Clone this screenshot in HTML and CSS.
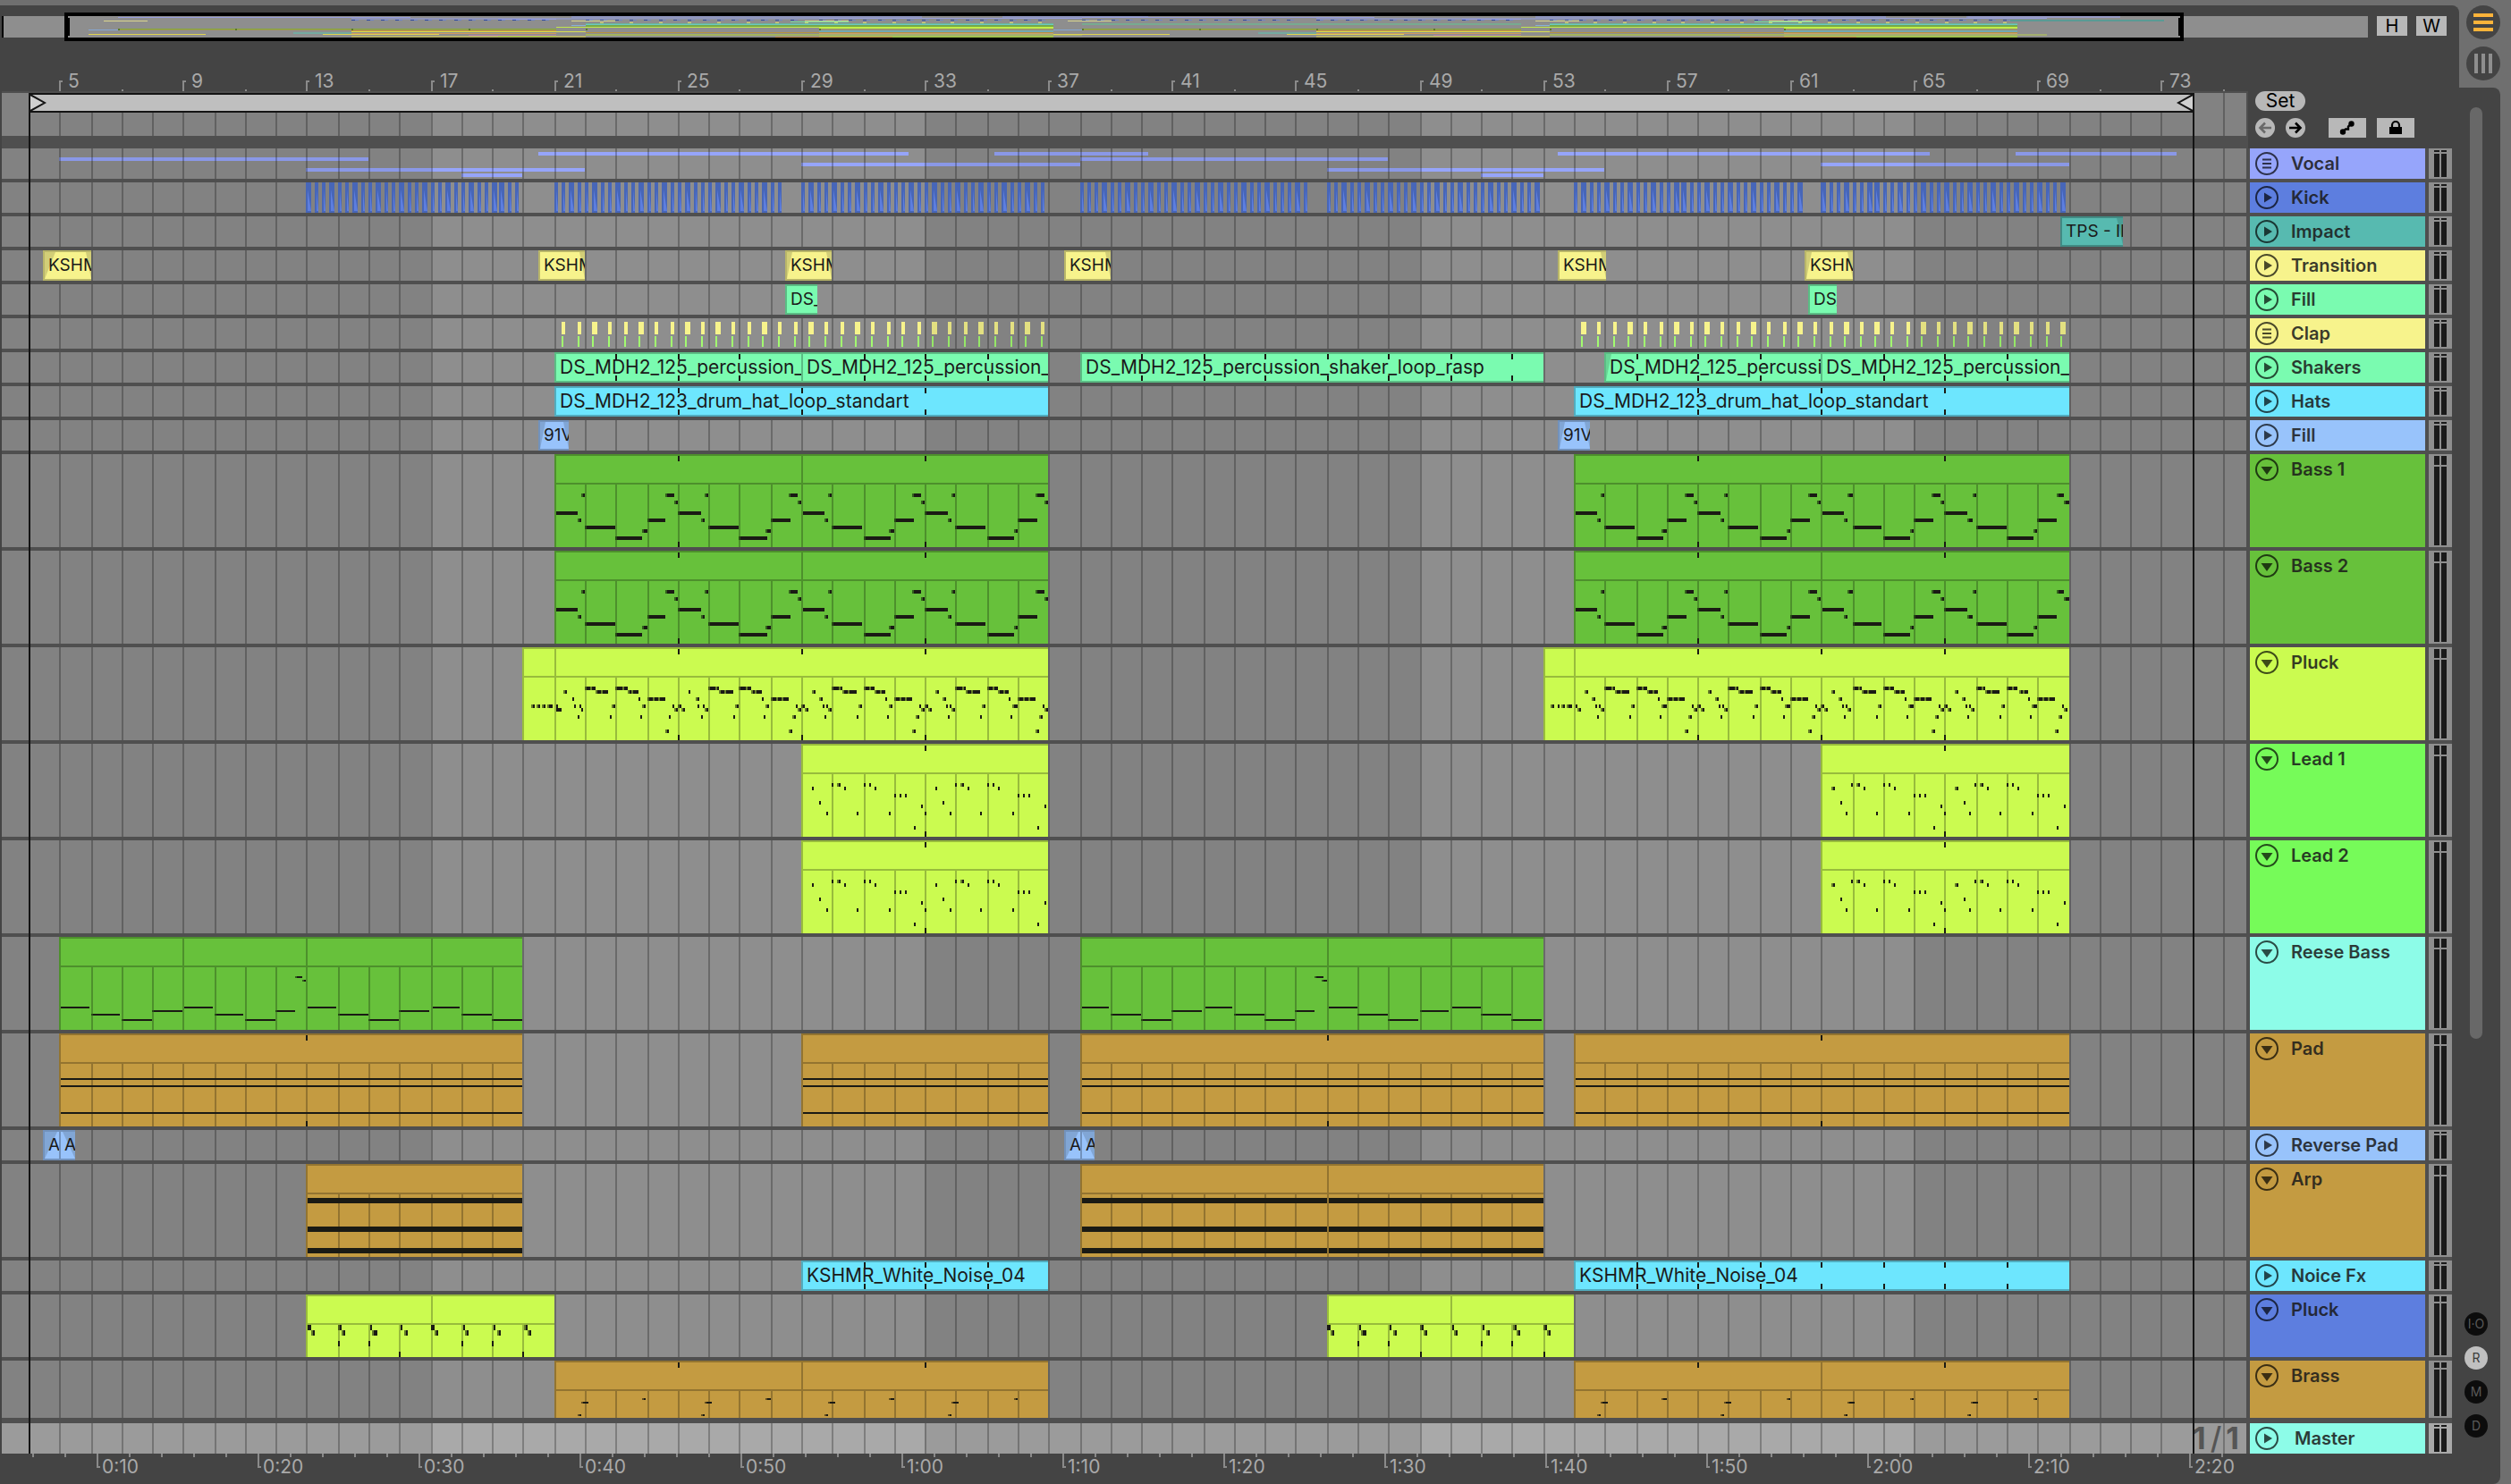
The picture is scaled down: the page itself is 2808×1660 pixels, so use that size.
FILE: index.html
```html
<!DOCTYPE html>
<html lang="en">
<head>
<meta charset="utf-8">
<title>Arrangement</title>
<link rel="stylesheet" href="styles.css">
</head>
<body>
<div class="app">
  <main class="panel">
    <section class="overview-row" aria-label="Overview">
      <div class="overview">
        <div class="overview-map" id="overview"></div>
        <div class="overview-window"></div>
      </div>
      <button class="square-button" type="button">H</button>
      <button class="square-button" type="button">W</button>
    </section>

    <div class="arrangement">
      <div class="top">
        <div class="top-time">
          <div class="ruler bar-ruler" id="bar-ruler"></div>
          <div class="loop-lane" id="loop-lane"></div>
        </div>
        <div class="controls">
          <button class="set-button" type="button">Set</button>
          <div class="control-row">
            <button class="round-button" type="button" aria-label="Previous locator" disabled>
              <svg width="22" height="22" viewBox="0 0 22 22"><path d="M18 11H7M11 5.500L5.500 11l5.500 5.500" fill="none" stroke="#6a6a6a" stroke-width="2.600"/></svg>
            </button>
            <button class="round-button" type="button" aria-label="Next locator">
              <svg width="22" height="22" viewBox="0 0 22 22"><path d="M4 11h11M11 5.500l5.500 5.500L11 16.500" fill="none" stroke="#000" stroke-width="2.600"/></svg>
            </button>
            <button class="tool-button tool-first" type="button" aria-label="Automation mode">
              <svg width="22" height="22" viewBox="0 0 22 22"><circle cx="6" cy="15.500" r="3.200"/><circle cx="15.500" cy="6.500" r="3.200"/><path d="M6 15.500l3-3h3l0-3 3.500-3" fill="none" stroke="#000" stroke-width="2.400"/></svg>
            </button>
            <button class="tool-button" type="button" aria-label="Lock envelopes">
              <svg width="22" height="22" viewBox="0 0 22 22"><path d="M4 10h14v8H4z"/><path d="M7 10V8a4 4 0 0 1 8 0v2" fill="none" stroke="#000" stroke-width="2.200"/></svg>
            </button>
          </div>
        </div>
      </div>
      <div class="tracks" id="tracks"></div>
      <div class="playline" id="play-start"></div>
      <div class="playline" id="play-end"></div>
    </div>
    <div class="ruler time-ruler" id="time-ruler"></div>
  </main>

  <aside class="side">
    <nav class="views">
      <button class="view-button" type="button" aria-label="Arrangement view">
        <svg width="38" height="38" viewBox="0 0 38 38"><path d="M8 9h22v4H8zM8 17h22v4H8zM8 25h22v4H8z" fill="#fdb33a"/></svg>
      </button>
      <button class="view-button" type="button" aria-label="Session view">
        <svg width="38" height="38" viewBox="0 0 38 38"><path d="M9 8h4v22H9zM17 8h4v22h-4zM25 8h4v22h-4z" fill="#8e8e8e"/></svg>
      </button>
    </nav>
    <div class="side-body">
      <div class="scroll-thumb"></div>
      <div class="toggles">
        <button class="toggle" type="button">I·O</button>
        <button class="toggle is-on" type="button">R</button>
        <button class="toggle" type="button">M</button>
        <button class="toggle" type="button">D</button>
      </div>
    </div>
  </aside>
</div>
<script src="app.js"></script>
</body>
</html>
```
FILE: styles.css
```css
* { box-sizing: border-box; }

body {
  margin: 0;
  background: #6f6f6f;
  color: #1a1a1a;
  font-family: Inter, "Liberation Sans", sans-serif;
  font-size: 21px;
  line-height: 34px;
}

button {
  margin: 0;
  padding: 0;
  border: 0;
  background: none;
  color: inherit;
  font: inherit;
}

svg { display: block; }

.app {
  display: flex;
  min-height: 100vh;
  padding: 6px 12px 0 0;
  overflow: hidden;
}

.panel {
  flex: 1;
  min-width: 0;
  padding-top: 8px;
  background: #444;
  border-radius: 0 8px 0 0;
}

/* Overview */
.overview-row {
  display: flex;
  align-items: center;
  gap: 10px;
  height: 32px;
  padding: 0 14px 2px 2px;
}

.overview {
  position: relative;
  flex: 1;
  height: 24px;
  margin-top: 2px;
  border-left: 2px solid #000;
  background: #8e8e8e;
}

.overview-map {
  height: 24px;
  overflow: hidden;
}

.overview-window {
  position: absolute;
  top: -4px;
  bottom: -4px;
  left: 68px;
  width: 2370px;
  border: 4px solid #000;
}

.overview-window::before,
.overview-window::after {
  content: "";
  position: absolute;
  top: 2px;
  bottom: 2px;
  width: 2px;
  background: #000;
}

.overview-window::before { left: 0; }
.overview-window::after { right: 0; }

.square-button {
  width: 34px;
  height: 22px;
  background: #b8b8b8;
  color: #000;
  font-size: 20px;
  line-height: 22px;
}

/* Timeline frame */
.arrangement {
  position: relative;
  padding: 0 8px 0 2px;
}

.top { display: flex; }

.top-time {
  flex: 1;
  min-width: 0;
  padding-bottom: 14px;
  background: #4f4f4f;
}

.ruler {
  position: relative;
  overflow: hidden;
  background: #444;
  color: #a9a9a9;
}

.bar-ruler {
  height: 58px;
  border-bottom: 2px solid #4f4f4f;
}

.time-ruler {
  height: 34px;
  margin: 0 8px 0 2px;
}

.ruler-label {
  position: absolute;
  line-height: 22px;
  white-space: nowrap;
}

.bar-ruler .ruler-label { bottom: 0; }
.time-ruler .ruler-label { top: 4px; }

.loop-lane {
  position: relative;
  height: 48px;
  margin-right: 2px;
  overflow: hidden;
  background: #8e8e8e;
}

.loop-bar {
  position: absolute;
  top: 0;
  height: 22px;
  border: 2px solid #141414;
  background: #bfbfbf;
}

.loop-bar svg {
  position: absolute;
  top: 0;
}

.loop-start { left: 0; }
.loop-end { right: 0; }

.playline {
  position: absolute;
  top: 58px;
  bottom: 0;
  width: 2px;
  background: #141414;
}

/* Locator and automation controls */
.controls {
  width: 228px;
  padding: 56px 0 0 8px;
}

.set-button {
  display: block;
  width: 56px;
  height: 22px;
  border-radius: 11px;
  background: #b8b8b8;
  color: #000;
  line-height: 22px;
}

.control-row {
  display: flex;
  gap: 12px;
  margin-top: 8px;
}

.round-button {
  width: 22px;
  height: 22px;
  border-radius: 50%;
  background: #b8b8b8;
}

.tool-button {
  display: flex;
  justify-content: center;
  width: 42px;
  height: 22px;
  background: #b8b8b8;
}

.tool-first { margin-left: 14px; }

/* Tracks */
.tracks {
  display: flex;
  flex-direction: column;
  gap: 4px;
  background: #4f4f4f;
}

.track {
  display: flex;
  gap: 4px;
  height: 34px;
}

.track-tall { height: 104px; }
.track-medium { height: 70px; }
.track-short { height: 64px; }
.track-master { margin-top: 2px; }

.lane {
  position: relative;
  flex: 1;
  min-width: 0;
  overflow: hidden;
  background: #8e8e8e;
}

.track-master .lane,
.track-master .meter { background: #a9a9a9; }

.lane > svg,
.loop-lane > svg {
  position: absolute;
  top: 0;
  left: 0;
}

.clip {
  position: absolute;
  top: 0;
  bottom: 0;
  overflow: hidden;
}

.clip svg {
  position: absolute;
  top: 0;
  left: 0;
}

.clip-name {
  position: relative;
  display: block;
  overflow: hidden;
  padding-left: 6px;
  white-space: nowrap;
}

.clip-narrow .clip-name { font-size: 19px; }

.grid-value {
  position: absolute;
  right: 8px;
  bottom: 0;
  display: flex;
  gap: 5px;
  color: #555;
  font-size: 34px;
  font-weight: 700;
}

.grid-slash { font-weight: 500; }

.head {
  display: flex;
  align-items: flex-start;
  gap: 14px;
  width: 196px;
  padding: 4px 0 0 6px;
  font-size: 20px;
  font-weight: 600;
  line-height: 26px;
}

.track-master .head { gap: 18px; }

.head-name {
  opacity: 0.85;
  white-space: nowrap;
}

.meter {
  display: grid;
  grid-template-columns: 6px 6px;
  grid-template-rows: 2px 1fr;
  gap: 2px;
  width: 26px;
  padding: 2px 6px;
  background: #8e8e8e;
}

.meter span { background: #1a1a1a; }
.track-tall .meter { grid-template-rows: 10px 1fr; }
.track-medium .meter,
.track-short .meter { grid-template-rows: 6px 1fr; }

/* Right-hand column */
.side {
  display: flex;
  flex-direction: column;
  width: 46px;
}

.views {
  display: flex;
  flex-direction: column;
  gap: 8px;
  height: 92px;
  padding-left: 8px;
}

.view-button {
  width: 38px;
  height: 38px;
  border-radius: 50%;
  background: #444;
}

.side-body {
  display: flex;
  flex: 1;
  flex-direction: column;
  justify-content: space-between;
  padding: 22px 0 52px 12px;
  background: #444;
  border-radius: 0 8px 8px 0;
}

.scroll-thumb {
  width: 14px;
  height: 70%;
  border-radius: 7px;
  background: #686868;
}

.toggles {
  display: flex;
  flex-direction: column;
  gap: 12px;
  margin-left: -6px;
}

.toggle {
  width: 26px;
  height: 26px;
  border-radius: 50%;
  background: #0c0c0c;
  color: #5a5a5a;
  font-size: 14px;
  line-height: 26px;
}

.toggle.is-on {
  background: #c0c0c0;
  color: #3a3a3a;
}
```
FILE: app.js
```js
const PX_PER_BAR = 34.562;
const BAR_FIVE = 64.48;
const FIRST_BAR = 4;
const LAST_BAR = 90;
const INK = "#1a1a14";

const snap = v => 2 * Math.round((v + 2) / 2) - 2;
const X = bar => snap(BAR_FIVE + (bar - 5) * PX_PER_BAR);
const rect = (x, y, w, h) => `M${x} ${y}h${w}v${h}h${-w}z`;
const range = (from, to, step) => {
  const out = [];
  for (let v = from; v < to - 0.001; v += step) out.push(v);
  return out;
};
const svg = (w, h, body) => `<svg width="${w}" height="${h}" aria-hidden="true">${body}</svg>`;
const path = (d, fill, opacity = 1) => `<path d="${d}" fill="${fill}" fill-opacity="${opacity}"/>`;

/* Bar lines, with every other 16 bars shaded */
function grid(h) {
  let shade = rect(0, 0, X(17), h) + rect(X(33), 0, X(49) - X(33), h) + rect(X(65), 0, 2000, h);
  let lines = range(FIRST_BAR, LAST_BAR, 1).map(b => rect(X(b), 0, 2, h)).join("");
  return svg(3200, h, path(shade, "#000", 0.077) + path(lines, "#000", 0.25));
}

const C = {
  violet: "#96a5fb", blue: "#5d7edf", teal: "#57bab0", yellow: "#f7f38c",
  mint: "#7afbb0", cyan: "#6de6fe", sky: "#98c3fb", green: "#67c13b",
  lime: "#cbfb50", lead: "#76fb59", aqua: "#8dfce8", gold: "#c49b41"
};

/* Audio clip: [start, end, name, fade-in px, fade-out px], loop marks */
function audioClip(color, [from, to, name, fadeIn = 0, fadeOut = 0, marks = []]) {
  const x = X(from), w = X(to) - x;
  const edge = rect(0, 0, w, 2) + rect(0, 32, w, 2) + rect(0, 2, 2, 30);
  const fades = (fadeIn ? `M2 2h${fadeIn}L2 32z` : "") + (fadeOut ? `M${w} 2h${-fadeOut}L${w} 32z` : "");
  const ticks = marks.map(b => rect(X(b) - x, 2, 2, 6) + rect(X(b) - x, 26, 2, 6)).join("");
  return `<div class="clip ${w < 80 ? "clip-narrow" : ""}" style="left:${x}px;width:${w}px;background:${color}">` +
    svg(w, 34, path(edge, "#000", 0.25) + path(fades, "#000", 0.15) + path(ticks, INK)) +
    `<span class="clip-name">${name}</span></div>`;
}

/* MIDI clip; notes are [start bar, end bar, y, height] */
function midiClip(color, h, from, to, notes, marks = [], lowMarks = true) {
  const x = X(from), w = X(to) - x;
  let edge = rect(0, 0, w, 2) + rect(0, 2, 2, h - 2) + rect(2, 32, w - 2, 2);
  edge += range(Math.floor(from) + 1, to, 1).map(b => rect(X(b) - x, 34, 2, h - 34)).join("");
  let soft = "", hard = "";
  for (const [a, b, y, nh = 4, solid] of notes) {
    if (a < from - 0.01 || a >= to) continue;
    const nx = Math.max(2 * (a <= from), X(a) - x);
    const nw = Math.max(2, Math.min(X(b) - x, w) - nx);
    const lead = !solid && nw > 2 && nx > 2 ? 2 : 0;
    if (lead) soft += rect(nx, y, 2, nh);
    hard += rect(nx + lead, y, nw - lead, nh);
  }
  const ticks = marks.map(b => rect(X(b) - x, 2, 2, 6) + (lowMarks ? rect(X(b) - x, h - 6, 2, 6) : "")).join("");
  return `<div class="clip" style="left:${x}px;width:${w}px;background:${color}">` +
    svg(w, h, path(edge, "#000", 0.25) + path(soft, "#000", 0.5) + path(hard, INK) + path(ticks, INK)) + `</div>`;
}

const repeat = (pattern, starts) =>
  starts.flatMap(s => pattern.map(([a, b, y, h, solid]) => [s + a, s + b, y, h, solid]));

const bassNotes = [
  [0, 0.75, 64], [0.75, 0.875, 72], [0.875, 1, 44], [1, 1.98, 80], [2, 2.875, 92],
  [2.86, 3, 84], [3, 3.625, 72], [3.6, 3.875, 44], [3.875, 4, 52]
];
const pluckNotes = [
  [0, 0.1, 64], [0.1, 0.22, 68], [0.33, 0.44, 48], [0.58, 0.68, 56], [0.67, 0.73, 64],
  [0.75, 0.78, 76], [0.8, 0.84, 64], [0.86, 0.97, 68],
  [1, 1.2, 44], [1.2, 1.32, 44], [1.33, 1.5, 48], [1.5, 1.78, 48], [1.79, 1.83, 76], [1.84, 1.96, 64],
  [2, 2.2, 44], [2.2, 2.37, 44], [2.38, 2.52, 48], [2.52, 2.71, 48], [2.71, 2.75, 56],
  [2.77, 2.8, 76], [2.83, 2.98, 64],
  [3, 3.18, 56], [3.18, 3.36, 56], [3.36, 3.58, 56], [3.59, 3.69, 92], [3.7, 3.8, 76],
  [3.81, 3.85, 64], [3.87, 3.98, 68]
];
const pickup = [[20.27, 20.38, 64], [20.45, 20.55, 64], [20.62, 20.73, 64], [20.78, 20.97, 64]];
const leadNotes = [
  [0.33, 0.42, 48], [0.6, 0.62, 64], [0.79, 0.8, 76], [0.98, 1, 44], [1.16, 1.26, 44],
  [1.37, 1.4, 48], [1.78, 1.8, 76], [2.01, 2.02, 44], [2.19, 2.2, 44], [2.36, 2.37, 48],
  [2.82, 2.83, 76], [3, 3.01, 56], [3.17, 3.18, 56], [3.35, 3.36, 56], [3.63, 3.64, 92],
  [3.86, 3.87, 68], [4, 4.01, 76]
];
const reeseNotes = start => range(0, 15, 1).flatMap(i => {
  const b = start + i;
  if (i === 7) return [[b, b + 0.6, 82, 2], [b + 0.6, b + 0.87, 44, 2], [b + 0.85, b + 1, 48, 2]];
  return [[b, b + 0.97, [78, 86, 92, 82][i % 4], 2]];
});
const stabNotes = start => range(0, 8, 1).flatMap(i => {
  const b = start + i;
  const low = i % 4 === 3 ? 64 : 52;
  const out = [[b + 0.04, b + 0.12, 34, 6], [b + 0.14, b + 0.26, 40, 6]];
  if (i % 4) out.push([b, b + 0.02, low, 6]);
  return out;
});
const brassNotes = [
  [0.75, 0.86, 60, 2], [0.86, 1.09, 46, 2], [2.85, 2.99, 42, 2],
  [4.75, 4.86, 60, 2], [4.86, 5.09, 46, 2], [6.87, 6.99, 42, 2]
];
const held = (from, to, rows, h) => rows.map(y => [from, to, y, h, true]);

const bassClips = [21, 29, 54, 62].map(s => midiClip(C.green, 104, s, s + 8, repeat(bassNotes, [s, s + 4]), [s + 4])).join("");
const leadClips = [29, 62].map(s => midiClip(C.lime, 104, s, s + 8, repeat(leadNotes, [s, s + 4]), [s + 4])).join("");
const pluckClips = [20, 53].map(s =>
  midiClip(C.lime, 104, s, s + 1, pickup.map(([a, b, y]) => [a + s - 20, b + s - 20, y])) +
  midiClip(C.lime, 104, s + 1, s + 17, repeat(pluckNotes, [s + 1, s + 5, s + 9, s + 13]), [s + 5, s + 9, s + 13])
).join("");
const reeseClips = [5, 38].map(s =>
  [0, 4, 8, 12].map(i => midiClip(C.green, 104, s + i, s + Math.min(i + 4, 15), reeseNotes(s))).join("")
).join("");
const padClips = [[5, 20, [13]], [29, 37, []], [38, 53, [46]], [54, 70, [62]]]
  .map(([a, b, m]) => midiClip(C.gold, 104, a, b, held(a, b, [50, 58, 88], 2), m)).join("");
const arpClips = [[13, 20], [38, 46], [46, 53]]
  .map(([a, b]) => midiClip(C.gold, 104, a, b, held(a, b, [38, 70, 94], 6))).join("");
const stabClips = [13, 17, 46, 50]
  .map(s => midiClip(C.lime, 70, s, s + 4, stabNotes(s > 40 ? 46 : 13))).join("");
const brassClips = [21, 29, 54, 62]
  .map(s => midiClip(C.gold, 64, s, s + 8, repeat(brassNotes, [s]), [s + 4], false)).join("");

function vocalLines() {
  const parts = [
    [5, 15, 10], [13, 22, 22], [18, 20, 28], [20.5, 32.5, 4], [29, 38, 16], [35.25, 40.25, 4],
    [38, 48, 10], [46, 55, 22], [51, 53, 28], [53.5, 65.5, 4], [62, 70, 16], [68.3, 73.5, 4]
  ];
  return svg(3200, 34, path(parts.map(([a, b, y]) => rect(X(a), y, X(b) - X(a), 4)).join(""), C.violet));
}

function kickClips() {
  const runs = [[13, 20], [21, 28.5], [29, 37], [38, 45.5], [46, 53], [54, 61.5], [62, 70]];
  let outer = "", inner = "";
  for (const b of runs.flatMap(([a, z]) => range(a, z, 0.25))) {
    const x = X(b), w = X(b + 0.135) - x;
    outer += rect(x, 0, w, 34);
    inner += `M${x + 2} 8L${x + w} 32h${-w + 2}z`;
  }
  return svg(3200, 34, path(outer, "#4766b8") + path(inner, C.blue));
}

function clapClips() {
  let top = "", low = "";
  for (const b of [...range(21.25, 37, 0.5), ...range(54.25, 70, 0.5)]) {
    top += rect(X(b), 4, X(b + 0.135) - X(b), 14);
    low += rect(X(b), 20, 2, 12);
  }
  return svg(3200, 34, path(top, C.yellow) + path(low, "#a2fb70"));
}

const audio = (color, clips) => clips.map(c => audioClip(color, c)).join("");

const TRACKS = [
  { name: "Vocal", color: C.violet, fold: "group", under: vocalLines() },
  { name: "Kick", color: C.blue, clips: kickClips() },
  { name: "Impact", color: C.teal, clips: audio(C.teal, [[69.75, 71.75, "TPS - II", 0, 7]]) },
  { name: "Transition", color: C.yellow, clips: audio(C.yellow, [
    [4.48, 6, "KSHM", 12, 6], [20.5, 22, "KSHM", 0, 6], [28.5, 30, "KSHM", 6, 6],
    [37.5, 39, "KSHM", 0, 6], [53.5, 55.04, "KSHM", 0, 6], [61.48, 63, "KSHM", 6, 6]]) },
  { name: "Fill", color: C.mint, clips: audio(C.mint, [[28.5, 29.5, "DS_"], [61.56, 62.5, "DS_"]]) },
  { name: "Clap", color: C.yellow, fold: "group", under: clapClips() },
  { name: "Shakers", color: C.mint, clips: audio(C.mint, [
    [21, 29, "DS_MDH2_125_percussion_", 0, 0, [23, 25, 27]],
    [29, 37, "DS_MDH2_125_percussion_", 0, 0, [31, 33, 35]],
    [38, 53, "DS_MDH2_125_percussion_shaker_loop_rasp", 0, 0, range(40, 53, 2)],
    [55, 62, "DS_MDH2_125_percussi", 6, 0, [56, 58, 60]],
    [62, 70, "DS_MDH2_125_percussion_", 0, 0, [64, 66, 68]]]) },
  { name: "Hats", color: C.cyan, clips: audio(C.cyan, [
    [21, 37, "DS_MDH2_123_drum_hat_loop_standart", 0, 0, [25, 29, 33]],
    [54, 70, "DS_MDH2_123_drum_hat_loop_standart", 0, 0, [58, 62, 66]]]) },
  { name: "Fill", color: C.sky, clips: audio(C.sky, [[20.5, 21.5, "91V", 6, 6], [53.5, 54.5, "91V", 6, 6]]) },
  { name: "Bass 1", color: C.green, size: "tall", clips: bassClips },
  { name: "Bass 2", color: C.green, size: "tall", clips: bassClips },
  { name: "Pluck", color: C.lime, size: "tall", clips: pluckClips },
  { name: "Lead 1", color: C.lead, size: "tall", clips: leadClips },
  { name: "Lead 2", color: C.lead, size: "tall", clips: leadClips },
  { name: "Reese Bass", color: C.aqua, size: "tall", clips: reeseClips },
  { name: "Pad", color: C.gold, size: "tall", clips: padClips },
  { name: "Reverse Pad", color: C.sky, clips: audio(C.sky, [
    [4.48, 5, "A", 14, 0], [5, 5.5, "A", 0, 14], [37.5, 38, "A", 14, 0], [38, 38.5, "A", 0, 14]]) },
  { name: "Arp", color: C.gold, size: "tall", clips: arpClips },
  { name: "Noice Fx", color: C.cyan, clips: audio(C.cyan, [
    [29, 37, "KSHMR_White_Noise_04", 0, 0, [31, 33, 35]],
    [54, 70, "KSHMR_White_Noise_04", 0, 0, range(56, 70, 2)]]) },
  { name: "Pluck", color: C.blue, size: "medium", clips: stabClips },
  { name: "Brass", color: C.gold, size: "short", clips: brassClips },
  { name: "Master", color: C.aqua, size: "master",
    clips: `<span class="grid-value"><span>1</span><span class="grid-slash">/</span><span>1</span></span>` }
];

const FOLD = {
  closed: `<path d="M10 7.500v11l9-5.500z"/>`,
  open: `<path d="M6.500 10h13L13 19z"/>`,
  group: `<path d="M8 7.500h10v2H8zM8 12h10v2H8zM8 16.500h10v2H8z"/>`
};
const HEIGHT = { tall: 104, medium: 70, short: 64 };

document.getElementById("tracks").innerHTML = TRACKS.map(t => {
  const h = HEIGHT[t.size] || 34;
  const fold = t.fold || (HEIGHT[t.size] ? "open" : "closed");
  return `<div class="track ${t.size ? "track-" + t.size : ""}">
    <div class="lane">${t.under || ""}${grid(h)}${t.clips || ""}</div>
    <div class="head" style="background:${t.color}">
      <button type="button" aria-label="Fold ${t.name}"><svg width="26" height="26" viewBox="0 0 26 26" fill-opacity="0.7"><circle cx="13" cy="13" r="12" fill="none" stroke="#000" stroke-opacity="0.7" stroke-width="2"/>${FOLD[fold]}</svg></button>
      <span class="head-name">${t.name}</span>
    </div>
    <div class="meter"><span></span><span></span><span></span><span></span></div>
  </div>`;
}).join("");

/* Bar ruler */
document.getElementById("bar-ruler").innerHTML =
  svg(2510, 56, path(range(5, 77, 2).map(b => (b - 5) % 4
    ? rect(X(b), 54, 2, 2)
    : rect(X(b), 44, 2, 12) + rect(X(b), 44, 4, 2)).join(""), "#8a8a8a")) +
  range(5, 77, 4).map(b => `<span class="ruler-label" style="left:${X(b) + 10}px">${b}</span>`).join("");

/* Time ruler: 18 px per second, 0:10 at 106 px */
const timeX = s => 106 + (s - 10) * 18;
const clock = s => Math.floor(s / 60) + ":" + String(s % 60).padStart(2, "0");
document.getElementById("time-ruler").innerHTML =
  svg(2510, 34, path(range(6, 144, 2).map(s => s % 10
    ? rect(timeX(s), 0, 2, 4)
    : rect(timeX(s), 0, 2, 16) + rect(timeX(s), 14, 4, 2)).join(""), "#8a8a8a")) +
  range(10, 141, 10).map(s => `<span class="ruler-label" style="left:${timeX(s) + 6}px">${clock(s)}</span>`).join("");

/* Loop brace and play range */
const loopX = X(4), loopW = X(74) + 2 - loopX;
document.getElementById("loop-lane").innerHTML = grid(48) +
  `<div class="loop-bar" style="left:${loopX}px;width:${loopW}px">
    <svg class="loop-start" width="18" height="18"><path d="M0 0L16 9L0 18" fill="#d0d0d0" stroke="#141414" stroke-width="2"/></svg>
    <svg class="loop-end" width="18" height="18"><path d="M18 0L2 9L18 18" fill="#d0d0d0" stroke="#141414" stroke-width="2"/></svg>
  </div>`;
document.getElementById("play-start").style.left = X(4) + 2 + "px";
document.getElementById("play-end").style.left = X(74) + 2 + "px";

/* Overview: [start bar, end bar, y, height, colour] */
const OX = bar => Math.round(128 + (bar - 5) * 32.68);
const map = [
  [5, 15, 1, 1, "#979ddb"], [13, 22, 2, 2, "#9095b8"], [18, 20, 3, 1, "#979ddb"],
  [20.5, 32.5, 0, 3, "#8f96bd"], [22, 29, 3, 1, "#8f92a8"], [29, 38, 2, 1, "#979ddb"], [35.25, 40.25, 0, 2, "#8f96bd"],
  [4, 6, 15, 1, "#86a7d4"], [4.5, 6, 5, 1, "#dbd68d"], [20.5, 22, 5, 1, "#dbd68d"], [28.5, 30, 5, 1, "#dbd68d"],
  [5, 20, 14, 1, "#86aa35"], [5, 20, 15, 1, "#9f935e"], [4, 8, 20, 1, "#ded350"],
  [11, 13, 18, 2, "#74a9a0"], [13, 20, 16, 1, "#c59540"], [13, 21, 17, 1, "#d8e04e"], [13, 20, 19, 1, "#d29a60"],
  [12, 16, 20, 1, "#ded350"], [17, 20, 21, 1, "#b580ae"], [13, 21, 22, 2, "#b5b06a"], [18, 20, 22, 1, "#a0c840"],
  [20.5, 21.5, 10, 1, "#86b4d4"], [21, 37, 8, 1, "#6cb49a"], [21, 37, 9, 1, "#6bc8c0"], [21, 37, 10, 2, "#76a84a"],
  [20, 29, 12, 1, "#c1e74c"], [29, 37, 12, 2, "#c1ef45"], [28, 30, 6, 1, "#70dba0"],
  [29, 37, 14, 2, "#9a9470"], [29, 37, 16, 2, "#71a8b4"], [21, 37, 18, 1, "#b8903e"], [29, 37, 19, 1, "#c8a070"],
  [21, 30.5, 20, 2, "#a3b45e"], [29, 38, 20, 2, "#a3ae70"], [29, 37, 22, 2, "#a0c050"], [27.5, 31.5, 23, 1, "#c89050"]
];
const copy = map.map(([a, b, ...r]) => [a + 33, b + 33, ...r]);
copy.push([38, 53, 8, 2, "#77aa90"], [68.3, 73.5, 0, 2, "#979bc4"], [69.75, 75, 4, 2, "#5a9a94"]);
let overview = [...map, ...copy].filter(([a]) => a < 70)
  .map(([a, b, y, h, c]) => path(rect(OX(a), y, OX(b) - OX(a), h), c)).join("");
const kicks = [[13, 20], [21, 28.5], [29, 37], [38, 45.5], [46, 53], [54, 61.5], [62, 70]].flatMap(([a, b]) => range(a, b, 0.5));
overview += path(kicks.map(b => rect(OX(b), 4, 4, 1)).join(""), "#2f4aa5");
overview += path(kicks.map(b => rect(OX(b) + 4, 4, 4, 1)).join(""), "#6f84c8");
const claps = [...range(21.5, 37, 1), ...range(54.5, 70, 1)];
overview += path(claps.map(b => rect(OX(b), 7, 4, 1)).join(""), "#e0dc6e");
overview += path([5, 9, 13, 17, 21, 29, 38, 42, 46, 50, 54, 62].map(b => rect(OX(b), 14, 2, 2)).join(""), "#5c7a26");
document.getElementById("overview").innerHTML = svg(2644, 24, overview);
```
